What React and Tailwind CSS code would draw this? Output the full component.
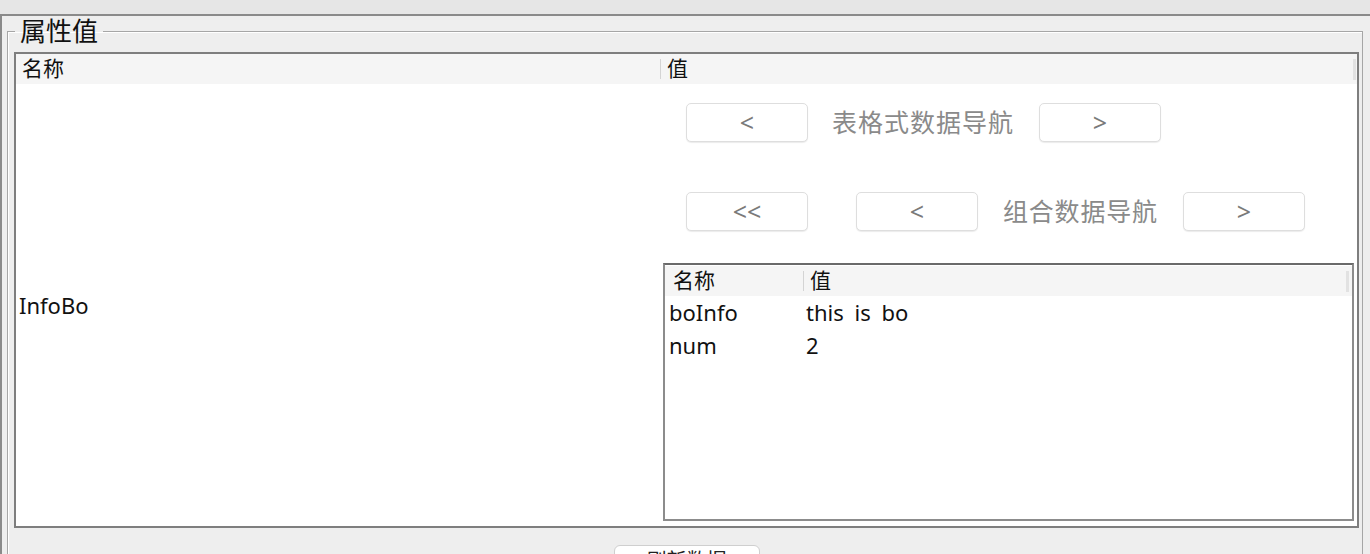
const font = { fontFamily: '"Noto Sans", "Noto Sans CJK SC", sans-serif' };

const NavButton = ({ label }) => (
  <button className="w-[122px] h-[39px] bg-white border border-[#dedede] rounded-[5px] shadow-[0_1px_1px_rgba(0,0,0,0.08)] text-[25px] leading-none text-[#7a7a7a] flex items-center justify-center">
    {label}
  </button>
);

const rows = [
  { name: "boInfo", value: "this is bo" },
  { name: "num", value: "2" },
];

export default function App() {
  return (
    <div
      className="w-[1370px] h-[554px] overflow-hidden bg-[#e6e6e6]"
      style={font}
    >
      <div className="h-[14px]" />
      <div className="h-[540px] border-t-2 border-l-2 border-[#8a8a8a] bg-[#eeeeee] pl-[5px] pr-[7px]">
        <fieldset className="h-[560px] border border-[#a6a6a6] shadow-[inset_1px_1px_0_#ffffff] pl-[6px] pr-[3px]">
          <legend className="ml-[1px] px-[5px] text-[26px] leading-[30px] text-[#111]">
            属性值
          </legend>

          <div className="mt-[6px] h-[476px] border-2 border-[#7e7e7e] bg-white flex flex-col">
            {/* header */}
            <div className="h-[30px] shrink-0 bg-[#f5f5f5] flex items-center text-[21px] text-[#111]">
              <div className="w-[644px] pl-[6px]">名称</div>
              <div className="h-[20px] border-l border-[#d4d4d4]" />
              <div className="flex-1 pl-[6px]">值</div>
              <div className="h-[21px] border-l-[3px] border-[#e2e2e2] mr-[1px]" />
            </div>

            {/* body */}
            <div className="flex-1 flex">
              <div className="w-[646px] flex items-center pl-[3px] text-[22px] text-[#111]">
                InfoBo
              </div>

              <div className="flex-1 flex flex-col pr-[3px] pb-[5px]">
                <div className="mt-[19px] ml-[24px] flex items-center">
                  <NavButton label="<" />
                  <span className="ml-[24px] text-[25px] text-[#8a8a8a] tracking-[1px]">
                    表格式数据导航
                  </span>
                  <div className="ml-[25px]">
                    <NavButton label=">" />
                  </div>
                </div>

                <div className="mt-[50px] ml-[24px] flex items-center">
                  <NavButton label="<<" />
                  <div className="ml-[48px]">
                    <NavButton label="<" />
                  </div>
                  <span className="ml-[25px] text-[25px] text-[#8a8a8a] tracking-[0.8px]">
                    组合数据导航
                  </span>
                  <div className="ml-[25px]">
                    <NavButton label=">" />
                  </div>
                </div>

                <div className="mt-[32px] ml-[1px] flex-1 border-2 border-[#8c8c8c] border-t-[#6a6a6a] bg-white pt-[1px]">
                  <div className="h-[30px] bg-[#f5f5f5] flex items-center text-[21px] text-[#111]">
                    <div className="w-[138px] pl-[8px]">名称</div>
                    <div className="h-[20px] border-l border-[#d4d4d4]" />
                    <div className="flex-1 pl-[6px]">值</div>
                    <div className="h-[21px] border-l-[3px] border-[#e2e2e2] mr-[3px]" />
                  </div>
                  {rows.map((row) => (
                    <div
                      key={row.name}
                      className="h-[33px] flex items-center text-[22px] text-[#111]"
                    >
                      <div className="w-[141px] pl-[4px]">{row.name}</div>
                      <div className="flex-1 [word-spacing:5px]">{row.value}</div>
                    </div>
                  ))}
                </div>
              </div>
            </div>
          </div>

          <div className="mt-[17px] flex justify-center">
            <button className="w-[146px] h-[40px] bg-white border border-[#cfcfcf] rounded-[6px] text-[20px] leading-[24px] text-[#222] flex justify-center pt-[3px]">
              刷新数据
            </button>
          </div>
        </fieldset>
      </div>
    </div>
  );
}
